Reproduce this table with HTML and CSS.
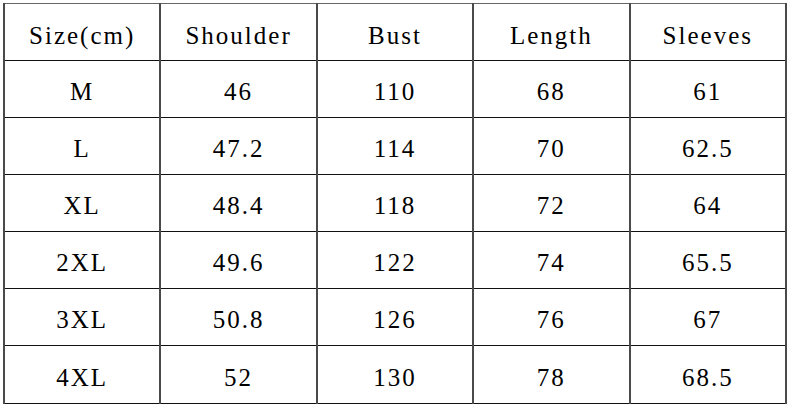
FILE: index.html
```html
<!DOCTYPE html>
<html>
<head>
<meta charset="utf-8">
<link rel="stylesheet" href="styles.css">
</head>
<body>
<table class="size-table">
  <tr class="head"><td>Size(cm)</td><td>Shoulder</td><td>Bust</td><td>Length</td><td>Sleeves</td></tr>
  <tr><td>M</td><td>46</td><td>110</td><td>68</td><td>61</td></tr>
  <tr><td>L</td><td>47.2</td><td>114</td><td>70</td><td>62.5</td></tr>
  <tr><td>XL</td><td>48.4</td><td>118</td><td>72</td><td>64</td></tr>
  <tr><td>2XL</td><td>49.6</td><td>122</td><td>74</td><td>65.5</td></tr>
  <tr><td>3XL</td><td>50.8</td><td>126</td><td>76</td><td>67</td></tr>
  <tr><td>4XL</td><td>52</td><td>130</td><td>78</td><td>68.5</td></tr>
</table>
</body>
</html>
```
FILE: styles.css
```css
html, body {
  margin: 0;
  padding: 0;
  background: #fff;
}
body {
  padding: 3px 0 0 3px;
}
.size-table {
  border-collapse: collapse;
  width: 784px;
  table-layout: fixed;
  font-family: "Liberation Serif";
  font-size: 25px;
  letter-spacing: 2px;
  color: #000;
}
.size-table td {
  height: 57px;
  padding: 5px 0 0 0;
  box-sizing: border-box;
  text-align: center;
  vertical-align: middle;
  border-left: 2px solid #4a4a4a;
  border-right: 2px solid #4a4a4a;
  border-top: 1px solid #111;
  border-bottom: 1px solid #111;
  line-height: 1;
}
.size-table .head td {
  padding-top: 6px;
}
.size-table tr:first-child td {
  border-top: 1px solid #666;
}
.size-table tr:last-child td {
  height: 58px;
}
```
